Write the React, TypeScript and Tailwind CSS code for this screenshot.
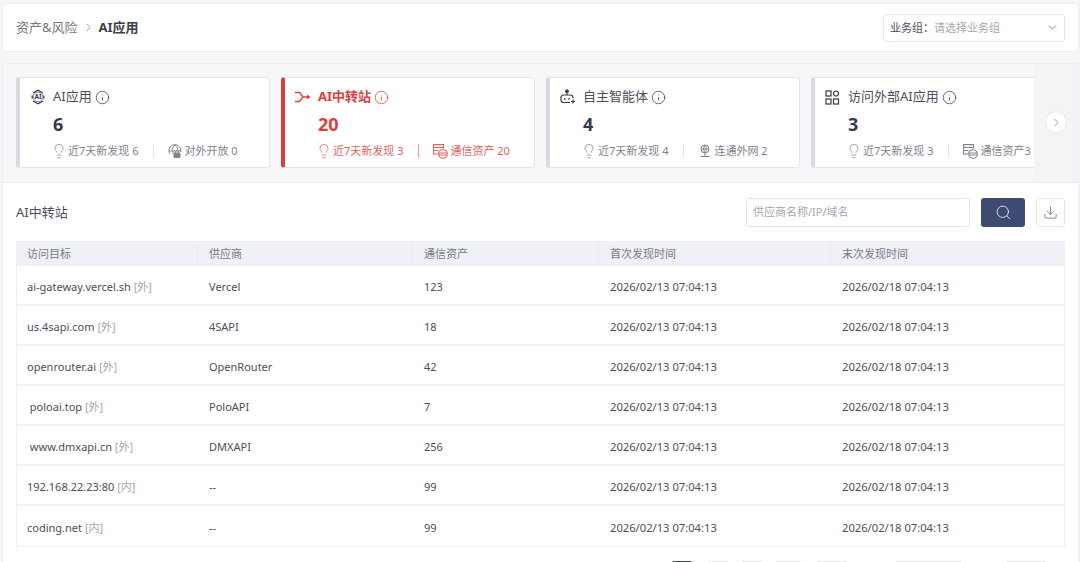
import { ChevronDown, ChevronRight, Download, Info, Lightbulb, Search } from 'lucide-react';
import type { ReactNode } from 'react';

const FONT = 'font-["Noto_Sans","Noto_Sans_CJK_SC",sans-serif]';

const AiIcon = () => (
  <svg width="16" height="16" viewBox="0 0 16 16" fill="none" stroke="currentColor" strokeWidth="1.300">
    <path d="M3 4 8 1.200 13 4M13.800 6.500V9.500M13 12 8 14.800 3 12M2.200 9.500V6.500" />
    <circle cx="8" cy="8" r="4.800" strokeWidth=".6" />
    <text x="8" y="10.400" textAnchor="middle" fontSize="6.500" fontWeight="700" fill="currentColor" stroke="none">AI</text>
  </svg>
);

const RelayIcon = () => (
  <svg width="16" height="12" viewBox="0 0 16 12" fill="none" stroke="currentColor" strokeWidth="1.300">
    <path d="M0 1.500h4.500L8 6l-3.500 4.500H0M8 6h5" />
    <path d="M12 3.500 15.500 6 12 8.500z" fill="currentColor" stroke="none" />
  </svg>
);

const RobotIcon = () => (
  <svg width="16" height="16" viewBox="0 0 16 16" fill="none" stroke="currentColor" strokeWidth="1.200">
    <circle cx="7" cy="2.200" r="1.300" fill="currentColor" />
    <path d="M7 3.500v2.500" />
    <path d="M13 9V8.500A2.500 2.500 0 0 0 10.500 6h-7A2.500 2.500 0 0 0 1 8.500v2.500A2.500 2.500 0 0 0 3.500 13.500H10" />
    <circle cx="4.800" cy="9.800" r=".9" fill="currentColor" stroke="none" />
    <circle cx="9" cy="9.800" r=".9" fill="currentColor" stroke="none" />
    <path d="M13 10.500v4M11 12.500h4" />
  </svg>
);

const AppsIcon = () => (
  <svg width="15" height="15" viewBox="0 0 15 15" fill="none" stroke="currentColor" strokeWidth="1.200">
    <rect x="1" y="1" width="5" height="5" />
    <circle cx="11" cy="3.500" r="2.500" />
    <rect x="1" y="9" width="5" height="5" />
    <rect x="8.500" y="9" width="5" height="5" />
  </svg>
);

const GlobeLockIcon = () => (
  <svg width="14" height="14" viewBox="0 0 14 14" fill="none" stroke="currentColor" strokeWidth="1">
    <path d="M2 10A6 6 0 1 1 12.800 8M1 7h12M7 1c-3 2.500-3 6 -1.500 9M7 1c2.500 2 3 4 2.800 5.500" />
    <rect x="6" y="9" width="6" height="4.500" rx=".5" fill="currentColor" />
    <path d="M7.500 9V7.800a1.500 1.500 0 0 1 3 0V9" />
  </svg>
);

const AssetIcon = () => (
  <svg width="15" height="15" viewBox="0 0 15 15" fill="none" stroke="currentColor" strokeWidth="1.100">
    <path d="M5.500 10H.6V.6h10v4M.6 3.500h10M.6 6.500h5" />
    <circle cx="10" cy="10" r="4.300" fill="white" />
    <path d="M6 9h8M6 11h8" />
  </svg>
);

const NetIcon = () => (
  <svg width="14" height="14" viewBox="0 0 14 14" fill="none" stroke="currentColor" strokeWidth="1">
    <circle cx="7" cy="5" r="4" />
    <path d="M3 5h8M7 1c-1.800 2.400-1.800 5.600 0 8M7 1c1.800 2.400 1.800 5.600 0 8M7 9v3M2.500 12.500h9" />
  </svg>
);

type CardData = {
  icon: ReactNode;
  title: string;
  value: number;
  recent: number;
  extraIcon: ReactNode;
  extra: string;
  active?: boolean;
};

const cards: CardData[] = [
  { icon: <AiIcon />, title: 'AI应用', value: 6, recent: 6, extraIcon: <GlobeLockIcon />, extra: '对外开放 0' },
  { icon: <RelayIcon />, title: 'AI中转站', value: 20, recent: 3, extraIcon: <AssetIcon />, extra: '通信资产 20', active: true },
  { icon: <RobotIcon />, title: '自主智能体', value: 4, recent: 4, extraIcon: <NetIcon />, extra: '连通外网 2' },
  { icon: <AppsIcon />, title: '访问外部AI应用', value: 3, recent: 3, extraIcon: <AssetIcon />, extra: '通信资产3' },
];

const rows = [
  { target: 'ai-gateway.vercel.sh', tag: '[外]', vendor: 'Vercel', count: 123 },
  { target: 'us.4sapi.com', tag: '[外]', vendor: '4SAPI', count: 18 },
  { target: 'openrouter.ai', tag: '[外]', vendor: 'OpenRouter', count: 42 },
  { target: ' poloai.top', tag: '[外]', vendor: 'PoloAPI', count: 7 },
  { target: ' www.dmxapi.cn', tag: '[外]', vendor: 'DMXAPI', count: 256 },
  { target: '192.168.22.23:80', tag: '[内]', vendor: '--', count: 99 },
  { target: 'coding.net', tag: '[内]', vendor: '--', count: 99 },
];

function StatCard({ card }: { card: CardData }) {
  const tone = card.active ? 'text-[#d9403d]' : 'text-[#353a50]';
  const sub = card.active ? 'text-[#e2625f]' : 'text-[#80838f]';
  return (
    <div
      className={`h-[91px] w-[254px] shrink-0 rounded-[3px] border border-[#e4e6ec] bg-white border-l-[4px] ${
        card.active ? 'border-l-[#d9403d]' : 'border-l-[#d8dbe4]'
      }`}
    >
      <div className={`flex h-[38px] items-center pl-[10px] text-[13px] ${card.active ? 'font-bold' : ''} ${tone}`}>
        <span className="flex w-[23px] shrink-0 items-center">{card.icon}</span>
        <span className={card.active ? '' : 'text-[#4b4e5c]'}>{card.title}</span>
        <Info size={15} strokeWidth={1.2} className="ml-[3px]" />
      </div>
      <div className={`ml-[33px] -mt-[3px] h-[26px] text-[18px] leading-[22px] font-bold ${tone}`}>{card.value}</div>
      <div className={`ml-[31px] flex h-[24px] items-center whitespace-nowrap text-[11px] ${sub}`}>
        <Lightbulb size={16} strokeWidth={1.1} className="mr-[1px]" />
        <span>近7天新发现 {card.recent}</span>
        <span className={`ml-[15px] mr-[14px] h-[14px] w-px ${card.active ? 'bg-[#e89a98]' : 'bg-[#e4e6ec]'}`} />
        <span className="mr-[2px] flex items-center">{card.extraIcon}</span>
        <span>{card.extra}</span>
      </div>
    </div>
  );
}

function Cell({ width, children }: { width: string; children: ReactNode }) {
  return <div className={`${width} shrink-0 whitespace-pre pl-[11px]`}>{children}</div>;
}

export default function App() {
  return (
    <div className={`${FONT} h-[562px] w-[1080px] overflow-hidden bg-[#f5f6f8] pl-[2px] pt-[3px] text-[#4b4e5c]`}>
      <header className="flex h-[49px] w-[1077px] items-center justify-between rounded-[3px] border border-[#eceef2] bg-white pl-[13px] pr-[13px]">
        <div className="flex items-center text-[13px]">
          <span className="text-[#74777f]">资产&风险</span>
          <ChevronRight size={13} strokeWidth={1.4} className="ml-[4px] mr-[4px] text-[#74777f]" />
          <span className="font-bold text-[#3b3f4a]">AI应用</span>
        </div>
        <div className="flex h-[28px] w-[182px] items-center justify-between rounded-[3px] border border-[#e6e8ee] pl-[6px] pr-[5px] text-[11px]">
          <span className="pt-[1px]">
            <span className="text-[#4b4e5c]">业务组：</span>
            <span className="text-[#a4a7b0]">请选择业务组</span>
          </span>
          <ChevronDown size={13} strokeWidth={1.4} className="text-[#5f626b]" />
        </div>
      </header>

      <main className="mt-[11px] h-[510px] w-[1077px] rounded-[3px] border border-[#eceef2] bg-white">
        <div className="relative h-[119px] overflow-hidden border-b border-[#e9ebf0] bg-[#f6f7f9]">
          <div className="flex gap-[11px] pl-[13px] pt-[13px]">
            {cards.map((card) => (
              <StatCard key={card.title} card={card} />
            ))}
          </div>
          <div className="absolute right-0 top-0 flex h-full w-[44px] items-center justify-center bg-[#f3f4f6] pb-[2px]">
            <span className="flex h-[22px] w-[22px] items-center justify-center rounded-full border border-[#e6e8ee] bg-white">
              <ChevronRight size={13} strokeWidth={1.4} className="text-[#74777f]" />
            </span>
          </div>
        </div>

        <section className="pl-[13px] pr-[13px]">
          <div className="flex h-[58px] items-center justify-between">
            <h2 className="pt-[1px] text-[13px] font-normal text-[#4b4e5c]">AI中转站</h2>
            <div className="flex items-center">
              <div className="flex h-[29px] w-[224px] items-center rounded-[3px] border border-[#e2e4ea] pl-[6px] text-[11px] text-[#a4a7b0]">
                供应商名称/IP/域名
              </div>
              <button className="ml-[11px] flex h-[29px] w-[44px] items-center justify-center rounded-[3px] bg-[#3f4a72] text-white">
                <Search size={17} strokeWidth={1.1} />
              </button>
              <button className="ml-[11px] flex h-[29px] w-[29px] items-center justify-center rounded-[3px] border border-[#e6e8ee] text-[#63666f]">
                <Download size={15} strokeWidth={1.2} />
              </button>
            </div>
          </div>

          <div className="w-[1049px] border-x border-b border-[#eef0f4] text-[11px]">
            <div className="flex h-[25px] items-center bg-[#eff1f6] text-[#777a84]">
              <Cell width="w-[181px] !pl-[10px] border-r border-[#e8eaf0] leading-[25px]">访问目标</Cell>
              <Cell width="w-[215px] border-r border-[#e8eaf0] leading-[25px]">供应商</Cell>
              <Cell width="w-[186px] border-r border-[#e8eaf0] leading-[25px]">通信资产</Cell>
              <Cell width="w-[232px] border-r border-[#e8eaf0] leading-[25px]">首次发现时间</Cell>
              <Cell width="w-[233px] leading-[25px]">末次发现时间</Cell>
            </div>
            {rows.map((row, i) => (
              <div
                key={row.target}
                className={`flex h-[40px] items-center pt-[5px] text-[#4b4e5c] ${i < rows.length - 1 ? 'border-b-2 border-[#f1f2f6]' : ''}`}
              >
                <Cell width="w-[181px] !pl-[10px]">
                  {row.target} <span className="text-[#a4a7b0]">{row.tag}</span>
                </Cell>
                <Cell width="w-[215px]">{row.vendor}</Cell>
                <Cell width="w-[186px]">{row.count}</Cell>
                <Cell width="w-[232px] text-[11.2px]">2026/02/13 07:04:13</Cell>
                <Cell width="w-[233px] text-[11.2px]">2026/02/18 07:04:13</Cell>
              </div>
            ))}
          </div>

          <div className="ml-[656px] mt-[14px] flex items-start">
            <span className="h-[10px] w-[20px] rounded-[2px] bg-[#3f4a72]" />
            <span className="ml-[15px] h-[10px] w-[22px] rounded-[2px] border border-[#e6e8ee]" />
            <span className="ml-[12px] h-[10px] w-[22px] rounded-[2px] border border-[#e6e8ee]" />
            <span className="ml-[12px] h-[10px] w-[30px] rounded-[2px] border border-[#e6e8ee]" />
            <span className="ml-[12px] h-[10px] w-[30px] rounded-[2px] border border-[#e6e8ee]" />
            <span className="ml-[48px] h-[10px] w-[67px] rounded-[2px] border border-[#e6e8ee]" />
            <span className="ml-[44px] h-[10px] w-[40px] rounded-[2px] border border-[#e6e8ee]" />
          </div>
        </section>
      </main>
    </div>
  );
}
